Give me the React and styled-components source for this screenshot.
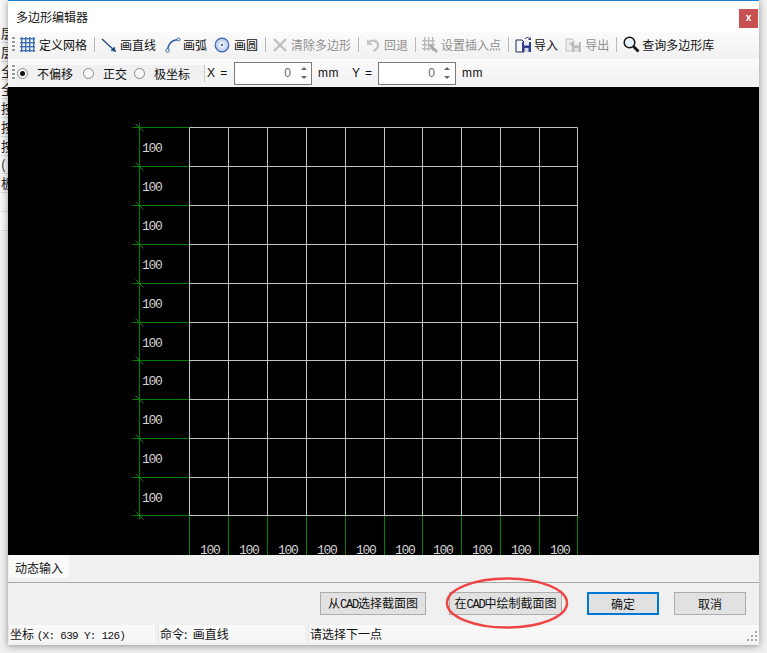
import React from "react";
import styled, { createGlobalStyle } from "styled-components";

const GlobalStyle = createGlobalStyle`
  html, body {
    margin: 0;
    padding: 0;
    width: 767px;
    height: 653px;
    overflow: hidden;
    background: #f0f0f0;
    font-family: "Noto Sans CJK SC", "Liberation Sans", sans-serif;
    font-size: 12px;
  }
  * { box-sizing: border-box; }
`;

// grid origin inside the canvas, the cells are not quite even in the original
const GRID_X = 181.5;
const GRID_Y = 40.5;
const OFFSETS = [0, 39, 78, 117, 156, 195, 233, 272, 311, 350, 388];
const GREEN = "#008000";
const GREY = "#c4c4c4";
const BEHIND_ROWS = ["层", "层", "全", "全", "按", "按", "按", "(", "板", "", ""];

const GridIcon = () => (
  <svg width="15" height="15" viewBox="0 0 15 15">
    {[1, 5, 9, 13].map((p) => (
      <React.Fragment key={p}>
        <rect x={p} y="0" width="1.4" height="15" fill="#3f6fb5" />
        <rect x="0" y={p} width="15" height="1.4" fill="#3f6fb5" />
      </React.Fragment>
    ))}
  </svg>
);

const LineIcon = () => (
  <svg width="16" height="16" viewBox="0 0 16 16">
    <path d="M1 2L14 14" stroke="#23507f" strokeWidth="1.4" fill="none" />
    <path d="M15 15L9.5 13.5L13.5 9.5Z" fill="#23507f" />
  </svg>
);

const ArcIcon = () => (
  <svg width="16" height="16" viewBox="0 0 16 16">
    <path d="M2.5 13.5C3 7 7 3 13 2.5" stroke="#2f5c99" strokeWidth="1.3" fill="none" />
    <circle cx="2.5" cy="13.5" r="1.7" fill="#fff" stroke="#2f5c99" />
    <circle cx="13.5" cy="2.5" r="1.5" fill="#fff" stroke="#2f5c99" />
  </svg>
);

const CircleIcon = () => (
  <svg width="16" height="16" viewBox="0 0 16 16">
    <defs>
      <radialGradient id="circleFill" cx="0.5" cy="0.5" r="0.6">
        <stop offset="0" stopColor="#ffffff" />
        <stop offset="1" stopColor="#9db8e6" />
      </radialGradient>
    </defs>
    <circle cx="8" cy="8" r="6.8" fill="url(#circleFill)" stroke="#3c63b0" strokeWidth="1.2" />
    <circle cx="8" cy="8" r="1.1" fill="#2b4f96" />
  </svg>
);

const ClearIcon = () => (
  <svg width="16" height="16" viewBox="0 0 16 16">
    <path d="M2 2L14 14M14 2L2 14" stroke="#bdbdbd" strokeWidth="2.2" fill="none" />
  </svg>
);

const UndoIcon = () => (
  <svg width="16" height="16" viewBox="0 0 16 16">
    <path d="M3 6C6 2.5 12 3 13 7C13.6 10 11.5 12.5 8.5 14" stroke="#c4c4c4" strokeWidth="2.4" fill="none" />
    <path d="M2 2V8H8Z" fill="#c4c4c4" />
  </svg>
);

const InsertIcon = () => (
  <svg width="16" height="16" viewBox="0 0 16 16">
    {[2, 6, 10].map((p) => (
      <rect key={p} x={p} y="0" width="1.4" height="14" fill="#bcbcbc" />
    ))}
    {[3, 7, 11].map((p) => (
      <rect key={p} x="0" y={p} width="13" height="1.4" fill="#bcbcbc" />
    ))}
    <path d="M8 8L15 15" stroke="#a8a8a8" strokeWidth="2.6" />
  </svg>
);

const ImportIcon = () => (
  <svg width="17" height="17" viewBox="0 0 17 17">
    <path d="M1 4H7L9 6V16H1Z" fill="#f4f6fb" stroke="#1f2b52" />
    <rect x="7" y="6" width="9" height="10" fill="#2f3f8f" />
    <rect x="9" y="6" width="5" height="3.5" fill="#e8ecf5" />
    <rect x="9.5" y="12" width="4" height="4" fill="#d5d9e6" />
    <path d="M10 3C11 1 14 1 15 3" stroke="#1f2b52" fill="none" />
    <path d="M15.8 1V4H13Z" fill="#1f2b52" />
  </svg>
);

const ExportIcon = () => (
  <svg width="17" height="17" viewBox="0 0 17 17">
    <path d="M1 3H7L9 5V15H1Z" fill="#eeeeee" stroke="#c2c2c2" />
    <rect x="7" y="6" width="9" height="10" fill="#bdbdbd" />
    <rect x="9" y="6" width="5" height="3.5" fill="#ececec" />
    <rect x="9.5" y="12" width="4" height="4" fill="#e2e2e2" />
    <path d="M4 8H8M6 6L8 8L6 10" stroke="#aaaaaa" fill="none" />
  </svg>
);

const SearchIcon = () => (
  <svg width="17" height="17" viewBox="0 0 17 17">
    <circle cx="6.5" cy="6.5" r="5.3" fill="#e3f2fc" stroke="#151515" strokeWidth="1.5" />
    <path d="M3.5 5.5C4 4 5 3.3 6.5 3.2" stroke="#ffffff" strokeWidth="1.2" fill="none" />
    <path d="M10.5 10.5L15.5 15.5" stroke="#151515" strokeWidth="2.8" />
  </svg>
);

const Behind = styled.div`
  position: absolute;
  left: 0;
  top: 0;
  width: 8px;
  height: 232px;
  padding: 24px 0 0 1px;
  background: #f7f7f7;
  overflow: hidden;
`;

const BehindRow = styled.div`
  height: 18.8px;
  line-height: 17px;
  font-size: 13px;
  color: #222;
  white-space: nowrap;
  border-bottom: 1px solid #d8d8d8;
`;

const Page = styled.div`
  position: relative;
  width: 767px;
  height: 653px;
  background: #f0f0f0;
  padding: 0 8px 8px 8px;
`;

const Dialog = styled.div`
  position: relative;
  width: 751px;
  height: 645px;
  display: flex;
  flex-direction: column;
  background: #f0f0f0;
  border-top: 1px solid #1883d7;
  box-shadow: 0 1px 7px rgba(0, 0, 0, 0.4);
`;

const TitleBar = styled.div`
  flex: 0 0 31px;
  display: flex;
  align-items: center;
  justify-content: space-between;
  background: #fff;
  padding: 0 1px 0 8px;
`;

const Title = styled.span`
  font-size: 12px;
  color: #111;
`;

const CloseButton = styled.div`
  width: 19px;
  height: 19px;
  margin-top: 3px;
  background: #c75050;
  color: #fff;
  font: bold 10px/18px "Liberation Sans", sans-serif;
  text-align: center;
`;

const ToolStrip = styled.div`
  flex: 0 0 ${(p) => p.$height}px;
  display: flex;
  align-items: center;
  padding: 0 0 ${(p) => p.$bottom ?? 0}px 4px;
  background: linear-gradient(#fbfbfb, #f1f1f1);
`;

const Grip = styled.span`
  width: 3px;
  height: 16px;
  margin-right: ${(p) => p.$gap}px;
  background: repeating-linear-gradient(#9a9a9a 0 2px, transparent 2px 4px);
`;

const ToolButton = styled.span`
  display: flex;
  align-items: center;
  gap: ${(p) => p.$gap ?? 3}px;
  margin-right: ${(p) => p.$right ?? 0}px;
  color: ${(p) => (p.$off ? "#8f8f8f" : "#111")};
  font-size: 12px;
  white-space: nowrap;
`;

const Divider = styled.span`
  width: 1px;
  height: 15px;
  margin: 0 6px 0 7px;
  background: #b9b9b9;
`;

const RadioGroup = styled.div`
  display: flex;
  align-items: center;
  height: 17px;
  width: 189px;
  background: #f0f0f0;
  border-right: 1px solid #c8c8c8;
`;

const RadioItem = styled.label`
  display: flex;
  align-items: center;
  gap: 9px;
  margin-left: ${(p) => p.$left}px;
  font-size: 12px;
  color: #111;
`;

const RadioDot = styled.span`
  position: relative;
  width: 11px;
  height: 11px;
  border-radius: 50%;
  border: 1px solid #8a8a8a;
  background: #f7f7f7;
  &::after {
    content: "";
    display: ${(p) => (p.$on ? "block" : "none")};
    position: absolute;
    inset: 2px;
    border-radius: 50%;
    background: #111;
  }
`;

const FieldLabel = styled.span`
  margin: ${(p) => p.$margin};
  font: 12px "Liberation Sans", sans-serif;
  letter-spacing: ${(p) => p.$spacing ?? 0.5}px;
  color: #111;
`;

const Spinner = styled.div`
  width: 78px;
  height: 23px;
  display: flex;
  align-items: center;
  justify-content: flex-end;
  background: #fff;
  border: 1px solid #7a7a7a;
  font: 12px "Liberation Sans", sans-serif;
  color: #666;
`;

const SpinArrows = styled.div`
  width: 15px;
  height: 100%;
  margin-left: 5px;
  display: flex;
  flex-direction: column;
  align-items: center;
  justify-content: center;
  gap: 6px;
  &::before, &::after {
    content: "";
    border-left: 3px solid transparent;
    border-right: 3px solid transparent;
  }
  &::before { border-bottom: 3px solid #666; }
  &::after { border-top: 3px solid #666; }
`;

const Canvas = styled.svg`
  display: block;
  flex: 0 0 468px;
  width: 751px;
  height: 468px;
  background: #000;
`;

const DimText = styled.text`
  fill: #d4d4d4;
  font: 13px "Liberation Mono", monospace;
  letter-spacing: -1.3px;
`;

const TabRow = styled.div`
  flex: 0 0 28px;
  display: flex;
  align-items: flex-start;
  padding-left: 1px;
  background: #f0f0f0;
  border-bottom: 1px solid #a8a8a8;
`;

const Tab = styled.div`
  height: 23px;
  padding: 0 6px;
  line-height: 25px;
  font-size: 12px;
  color: #111;
  background: #fafafa;
`;

const ActionRow = styled.div`
  position: relative;
  flex: 0 0 40px;
  display: flex;
  align-items: center;
  justify-content: flex-end;
  padding: 0 13px 0 0;
  background: #f0f0f0;
`;

const ActionButton = styled.button`
  height: 23px;
  width: ${(p) => p.$width}px;
  margin-left: ${(p) => p.$left}px;
  padding: 0;
  background: #e1e1e1;
  border: ${(p) => (p.$primary ? "2px solid #0078d7" : "1px solid #adadad")};
  color: #111;
  font-family: "Noto Sans CJK SC", sans-serif;
  font-size: 12px;
  white-space: nowrap;
`;

const Mark = styled.svg`
  position: absolute;
  z-index: 1;
  left: 436px;
  top: -7px;
  width: 126px;
  height: 54px;
  pointer-events: none;
`;

const StatusBar = styled.div`
  flex: 1;
  display: flex;
  gap: 3px;
  padding: 2px 0;
  background: #f0f0f0;
`;

const StatusCell = styled.div`
  flex: ${(p) => (p.$width ? `0 0 ${p.$width}px` : 1)};
  position: relative;
  padding-left: 1px;
  line-height: 18px;
  font-size: 12px;
  color: #111;
  white-space: pre;
  background: linear-gradient(#fafafa, #f6f6f6);
  border-left: 1px solid #e6e6e6;
`;

const Mono = styled.span`
  font: 11px "Liberation Mono", monospace;
  letter-spacing: -0.7px;
`;

const Narrow = styled.span`
  font: 12px "Liberation Mono", monospace;
  letter-spacing: -1.2px;
`;

const SizeGrip = styled.svg`
  position: absolute;
  right: 1px;
  bottom: 1px;
  width: 12px;
  height: 12px;
`;

const App = () => {
  const right = GRID_X + OFFSETS[10];
  const bottom = GRID_Y + OFFSETS[10];
  return (
    <Page>
      <GlobalStyle />
      <Behind>
        {BEHIND_ROWS.map((c, i) => (
          <BehindRow key={i}>{c}</BehindRow>
        ))}
      </Behind>
      <Dialog>
        <TitleBar>
          <Title>多边形编辑器</Title>
          <CloseButton>x</CloseButton>
        </TitleBar>
        <ToolStrip $height={27} $bottom={2}>
          <Grip $gap={5} />
          <ToolButton $gap={4}><GridIcon />定义网格</ToolButton>
          <Divider />
          <ToolButton $gap={3} $right={9}><LineIcon />画直线</ToolButton>
          <ToolButton $gap={2} $right={7}><ArcIcon />画弧</ToolButton>
          <ToolButton $gap={4}><CircleIcon />画圆</ToolButton>
          <Divider />
          <ToolButton $off><ClearIcon />清除多边形</ToolButton>
          <Divider />
          <ToolButton $off><UndoIcon />回退</ToolButton>
          <Divider />
          <ToolButton $off><InsertIcon />设置插入点</ToolButton>
          <Divider />
          <ToolButton $gap={2} $right={7}><ImportIcon />导入</ToolButton>
          <ToolButton $off><ExportIcon />导出</ToolButton>
          <Divider />
          <ToolButton $gap={2}><SearchIcon />查询多边形库</ToolButton>
        </ToolStrip>
        <ToolStrip $height={28}>
          <Grip $gap={1} />
          <RadioGroup>
            <RadioItem $left={1}><RadioDot $on />不偏移</RadioItem>
            <RadioItem $left={10}><RadioDot />正交</RadioItem>
            <RadioItem $left={7}><RadioDot />极坐标</RadioItem>
          </RadioGroup>
          <FieldLabel $margin="0 6px 0 2px" $spacing={0.9}>X =</FieldLabel>
          <Spinner>0<SpinArrows /></Spinner>
          <FieldLabel $margin="0 13px 0 6px">mm</FieldLabel>
          <FieldLabel $margin="0 5px 0 0" $spacing={0.9}>Y =</FieldLabel>
          <Spinner>0<SpinArrows /></Spinner>
          <FieldLabel $margin="0 0 0 6px">mm</FieldLabel>
        </ToolStrip>
        <Canvas viewBox="0 0 751 468">
          {OFFSETS.map((off, i) => (
            <React.Fragment key={off}>
              <line x1={GRID_X - 57} y1={GRID_Y + off} x2={GRID_X} y2={GRID_Y + off} stroke={GREEN} />
              <path d={`M${GRID_X - 54} ${GRID_Y + off - 4}l8 8`} stroke={GREEN} fill="none" />
              <line x1={GRID_X + off} y1={bottom} x2={GRID_X + off} y2={468} stroke={GREEN} />
              {i < 10 && (
                <>
                  <DimText x={GRID_X - 47.5} y={GRID_Y + off + 24}>100</DimText>
                  <DimText x={GRID_X + off + 10.5} y={467}>100</DimText>
                </>
              )}
            </React.Fragment>
          ))}
          <line x1={GRID_X - 50} y1={GRID_Y - 4} x2={GRID_X - 50} y2={bottom + 4} stroke={GREEN} />
          {OFFSETS.map((off) => (
            <React.Fragment key={off}>
              <line x1={GRID_X} y1={GRID_Y + off} x2={right} y2={GRID_Y + off} stroke={GREY} />
              <line x1={GRID_X + off} y1={GRID_Y} x2={GRID_X + off} y2={bottom} stroke={GREY} />
            </React.Fragment>
          ))}
        </Canvas>
        <TabRow>
          <Tab>动态输入</Tab>
        </TabRow>
        <ActionRow>
          <ActionButton $width={106}>从<Narrow>CAD</Narrow>选择截面图</ActionButton>
          <ActionButton $width={113} $left={23}>在<Narrow>CAD</Narrow>中绘制截面图</ActionButton>
          <ActionButton $width={72} $left={25} $primary>确定</ActionButton>
          <ActionButton $width={72} $left={15}>取消</ActionButton>
          <Mark viewBox="0 0 126 54">
            <ellipse cx="63" cy="27" rx="60" ry="24.5" fill="none" stroke="#f04444" strokeWidth="2.5" />
          </Mark>
        </ActionRow>
        <StatusBar>
          <StatusCell $width={147}>坐标 <Mono>(X: 639 Y: 126)</Mono></StatusCell>
          <StatusCell $width={147}>命令:  画直线</StatusCell>
          <StatusCell>
            请选择下一点
            <SizeGrip viewBox="0 0 12 12">
              {[[9, 9], [5, 9], [1, 9], [9, 5], [5, 5], [9, 1]].map(([x, y]) => (
                <rect key={`${x}-${y}`} x={x} y={y} width="2" height="2" fill="#a8a8a8" />
              ))}
            </SizeGrip>
          </StatusCell>
        </StatusBar>
      </Dialog>
    </Page>
  );
};

export default App;
